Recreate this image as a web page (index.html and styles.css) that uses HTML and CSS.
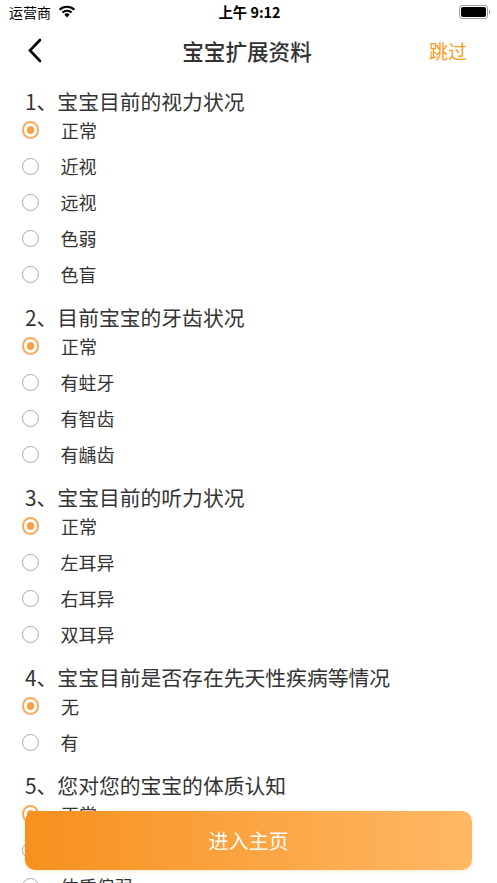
FILE: index.html
```html
<!DOCTYPE html>
<html lang="zh-CN">
<head>
    <meta charset="UTF-8">
    <meta name="viewport" content="width=device-width, initial-scale=1.0">
    <title>宝宝扩展资料</title>
    <link rel="stylesheet" href="styles.css">
</head>
<body>
    <!-- Status bar -->
    <div class="status-bar">
        <div class="carrier">
            运营商
            <svg class="wifi" width="18" height="13" viewBox="0 0 18 13">
                <path d="M9 12.5 L6.3 9.6 A4 4 0 0 1 11.7 9.6 Z" fill="#000"/>
                <path d="M4.4 7.6 A6.6 6.6 0 0 1 13.6 7.6" stroke="#000" stroke-width="2.1" fill="none"/>
                <path d="M1.6 4.8 A10.6 10.6 0 0 1 16.4 4.8" stroke="#000" stroke-width="2.1" fill="none"/>
            </svg>
        </div>
        <div class="time">上午 9:12</div>
        <div class="battery">
            <div class="battery-body"><span></span></div>
            <div class="battery-cap"></div>
        </div>
    </div>

    <!-- Navigation -->
    <div class="nav-bar">
        <a class="back" href="#">
            <svg width="18" height="28" viewBox="0 0 18 28">
                <polyline points="13,3 3,13.5 13,24" stroke="#000" stroke-width="2.6" fill="none" stroke-linecap="round" stroke-linejoin="miter"/>
            </svg>
        </a>
        <div class="title">宝宝扩展资料</div>
        <a class="skip" href="#">跳过</a>
    </div>

    <!-- Questions -->
    <div class="content">
        <div class="section">
            <div class="question">1、宝宝目前的视力状况</div>
            <label class="option checked"><span class="radio"></span>正常</label>
            <label class="option"><span class="radio"></span>近视</label>
            <label class="option"><span class="radio"></span>远视</label>
            <label class="option"><span class="radio"></span>色弱</label>
            <label class="option"><span class="radio"></span>色盲</label>
        </div>

        <div class="section">
            <div class="question">2、目前宝宝的牙齿状况</div>
            <label class="option checked"><span class="radio"></span>正常</label>
            <label class="option"><span class="radio"></span>有蛀牙</label>
            <label class="option"><span class="radio"></span>有智齿</label>
            <label class="option"><span class="radio"></span>有龋齿</label>
        </div>

        <div class="section">
            <div class="question">3、宝宝目前的听力状况</div>
            <label class="option checked"><span class="radio"></span>正常</label>
            <label class="option"><span class="radio"></span>左耳异</label>
            <label class="option"><span class="radio"></span>右耳异</label>
            <label class="option"><span class="radio"></span>双耳异</label>
        </div>

        <div class="section">
            <div class="question">4、宝宝目前是否存在先天性疾病等情况</div>
            <label class="option checked"><span class="radio"></span>无</label>
            <label class="option"><span class="radio"></span>有</label>
        </div>

        <div class="section">
            <div class="question">5、您对您的宝宝的体质认知</div>
            <label class="option checked"><span class="radio"></span>正常</label>
            <label class="option"><span class="radio"></span>体质较好</label>
            <label class="option"><span class="radio"></span>体质偏弱</label>
        </div>
    </div>

    <!-- Bottom button -->
    <a class="enter-button" href="#">进入主页</a>
</body>
</html>
```

FILE: styles.css
```css
body {
    margin: 0;
    width: 497px;
    height: 883px;
    overflow: hidden;
    background-color: #fff;
    font-family: "Noto Sans CJK SC", "Noto Sans", sans-serif;
    color: #333;
}

a {
    text-decoration: none;
}

/* Status bar */
.status-bar {
    height: 24px;
    display: grid;
    grid-template-columns: 1fr auto 1fr;
    align-items: center;
    padding: 0 7px 0 9px;
    font-size: 14px;
    color: #000;
}

.carrier {
    display: flex;
    align-items: center;
    gap: 7px;
    line-height: 24px;
}

.wifi {
    margin-top: -2px;
}

.time {
    font-weight: 600;
    font-size: 14.4px;
    line-height: 24px;
}

.battery {
    justify-self: end;
    display: flex;
    align-items: center;
    gap: 1px;
}

.battery-body {
    width: 25px;
    height: 10px;
    border: 1px solid #999;
    border-radius: 3.5px;
    padding: 1px;
    box-sizing: content-box;
}

.battery-body span {
    display: block;
    width: 100%;
    height: 100%;
    background-color: #000;
    border-radius: 2px;
}

.battery-cap {
    width: 1.5px;
    height: 4px;
    background-color: #999;
    border-radius: 0 1px 1px 0;
}

/* Navigation */
.nav-bar {
    height: 53px;
    display: grid;
    grid-template-columns: 1fr auto 1fr;
    align-items: center;
    padding: 0 30px 0 27px;
}

.back {
    display: flex;
    align-items: center;
    margin-top: 1px;
}

.title {
    font-size: 21.6px;
    font-weight: 500;
    color: #333;
    line-height: 53px;
}

.skip {
    justify-self: end;
    font-size: 19px;
    color: #fb9a20;
    line-height: 53px;
}

/* Questions */
.content {
    padding: 13px 25px 0 25px;
}

.section + .section {
    margin-top: 14px;
}

.question {
    font-size: 20.8px;
    line-height: 22px;
    height: 22px;
    color: #333;
    white-space: nowrap;
}

.option {
    display: flex;
    align-items: center;
    height: 36px;
    font-size: 18px;
    color: #333;
}

.radio {
    width: 15px;
    height: 15px;
    border: 1.2px solid #aaa;
    border-radius: 50%;
    margin-left: -3.5px;
    margin-right: 22px;
    position: relative;
    flex-shrink: 0;
}

.option.checked .radio {
    border: 2px solid #fcaa5a;
    width: 13.5px;
    height: 13.5px;
}

.option.checked .radio::after {
    content: '';
    position: absolute;
    top: 3px;
    left: 3px;
    width: 7.5px;
    height: 7.5px;
    border-radius: 50%;
    background-color: #fc9f44;
}

/* Bottom button */
.enter-button {
    position: fixed;
    left: 25px;
    top: 811px;
    width: 447px;
    height: 59px;
    border-radius: 10px;
    background: linear-gradient(to right, #f7901e, #ffb865);
    color: #fff;
    font-size: 20px;
    display: flex;
    align-items: center;
    justify-content: center;
    box-shadow: 0 2px 4px rgba(247, 144, 30, 0.15);
}
```
